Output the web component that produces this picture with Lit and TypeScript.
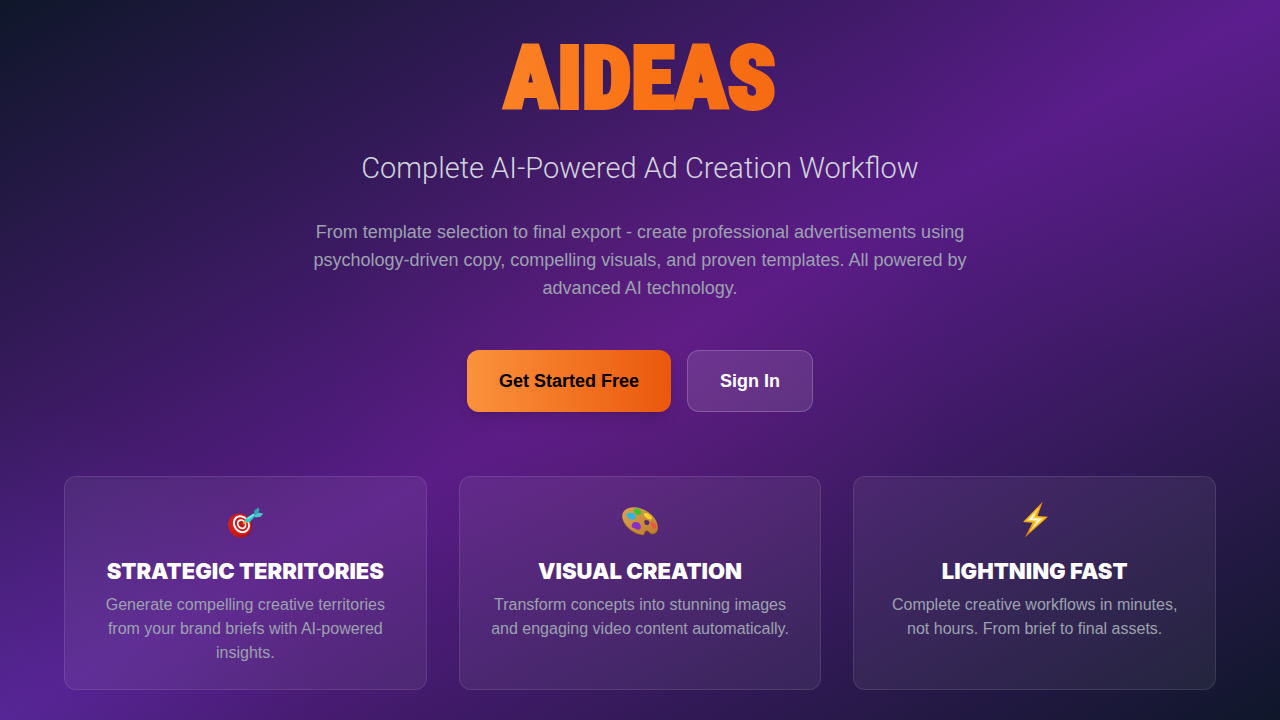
import { LitElement, html, css, svg } from "lit";
import { customElement } from "lit/decorators.js";

const target = svg`
  <defs>
    <linearGradient id="rim" x1="0" y1="0" x2="1" y2="1">
      <stop offset="0" stop-color="#e8211d" /><stop offset="1" stop-color="#8f0f12" />
    </linearGradient>
  </defs>
  <ellipse cx="15" cy="24.6" rx="11.6" ry="12.4" transform="rotate(-38 15 24.6)" fill="url(#rim)" />
  <ellipse cx="16" cy="23.4" rx="9.8" ry="11" transform="rotate(-38 16 23.4)" fill="#d81f1e" />
  <ellipse cx="16.4" cy="23.2" rx="8" ry="9.4" transform="rotate(-38 16.4 23.2)" fill="#fff" />
  <ellipse cx="16.5" cy="23.2" rx="6.2" ry="7.4" transform="rotate(-38 16.5 23.2)" fill="#cf1d1d" />
  <ellipse cx="16.6" cy="23.2" rx="4.4" ry="5.3" transform="rotate(-38 16.6 23.2)" fill="#fff" />
  <ellipse cx="16.7" cy="23.2" rx="2.8" ry="3.4" transform="rotate(-38 16.7 23.2)" fill="#c51a1c" />
  <path d="M17.5 23l2.2-4 2.8 2.5z" fill="#f2b21b" />
  <path d="M20.5 17.5l6.5-4.3 4.2-1.4-1.6 4-4.3 4.6q-2.5 1.5-4.5.5-1.5-1.2-.3-3.4z" fill="#35c9d2" />
  <path d="M29 14l.6-4.800 3.800-2.700 1.200 2.700-2.800 4z" fill="#2fa9b2" />
  <path d="M29.500 14.500l4-3 4.700 1.300-2.700 3-5.200.8z" fill="#4fc6cd" />
  <path d="M22.500 17.800l6.500-4.300" stroke="#8eeeee" stroke-width="1.200" />
`;

const palette = svg`
  <defs>
    <linearGradient id="wood" x1="0" y1="0" x2="1" y2="1">
      <stop offset="0" stop-color="#dba24f" /><stop offset="1" stop-color="#bd7d30" />
    </linearGradient>
  </defs>
  <path fill-rule="evenodd" fill="#8b5a20" d="M2.500 14C4 8 12 5.500 21 8.500c9 3 16 10 16.700 17.500.5 5-2 7.300-5 7.500-3.500.2-3.300-3-6-3.200-2.500 0-1 4.200-4 4C14 34 .5 23.500 2.500 14z M24.500 21c0 2.200 1.500 3.400 3 3.200s2.500-2.200 1.500-3.600c-1.200-1.700-4.500-1.900-4.500.4z" />
  <path fill-rule="evenodd" fill="url(#wood)" d="M2.500 13C4 7.300 12 4.500 21 7.500c9 3 16 10 16.700 17.500.5 5-2 7.300-5 7.500-3.500.2-3.300-3-6-3.200-3 0-1.300 4.300-4 4.100C14 33 .5 22.500 2.500 13z M24 20.500c0 2.700 1.700 3.900 3.300 3.700s2.800-2.200 1.700-4c-1.300-1.900-5-2.200-5 .3z" />
  <path d="M6.800 14c0-2.700 2.500-2 4-2.300 2.700-.3 5.200 2 4.800 4.500-.4 2.600-3 2.800-4.900 2.400-2-.4-1.300-1.800-2.900-2.300-1-.4-1.200-1.300-1-2.300z" fill="#2fb4e6" />
  <path d="M14 8.500c1.500-1.500 4.300-1.200 5.800.5 1.700 1.200 2.200 3.800.3 4.800-1.800.9-3.700.2-4.500-1-1-1.400-2.800-2.100-1.600-4.300z" fill="#3cc530" />
  <path d="M24.500 12.300c1.500-1 4.200.3 5.800 2 1.600 1.600 2.200 4 .6 4.200-2.100.1-3.300-.8-4.700-1.700-1.700-1.100-3-3.500-1.700-4.500z" fill="#fbd52c" />
  <path d="M12.500 22.500c1.700-2.200 6-1.700 7.500.7 1.700 2.500 1 5.300-1.700 5.600-2.200.1-3.100-1.700-5.200-2-1.900-.3-1.500-2.600-.6-4.300z" fill="#8b2ccb" />
  <path d="M31.300 21.500c1.600-.7 3.800 1 4.900 3.200.9 1.800.2 3.500-1.500 3-1.400-.4-2-1.600-3-2.700-.9-1-1.700-3-.4-3.500z" fill="#f1523f" />
`;

const bolt = svg`
  <defs>
    <linearGradient id="edge" x1="0" y1="0" x2="0" y2="1">
      <stop offset="0" stop-color="#f39a12" /><stop offset=".6" stop-color="#f7a916" /><stop offset="1" stop-color="#cf720d" />
    </linearGradient>
  </defs>
  <path d="M27.700.7L8 21l9.500.8L9.700 36.700 33 15.700l-10.500-.8z" fill="url(#edge)" />
  <path d="M24.500 5.500L11 19.700l9.500.7-6.500 11L29.500 16.700l-9.800-.5z" fill="#ffd84a" />
  <path d="M21.500 10L13.500 18.900l9 .6-4.700 7.500 8.700-9.300-9-.3z" fill="#fffbe0" />
`;

const features = [
  {
    icon: target,
    title: "STRATEGIC TERRITORIES",
    text: "Generate compelling creative territories from your brand briefs with AI-powered insights.",
  },
  {
    icon: palette,
    title: "VISUAL CREATION",
    text: "Transform concepts into stunning images and engaging video content automatically.",
  },
  {
    icon: bolt,
    title: "LIGHTNING FAST",
    text: "Complete creative workflows in minutes, not hours. From brief to final assets.",
  },
];

@customElement("app-root")
export class AppRoot extends LitElement {
  static styles = css`
    :host {
      display: block;
      font-family: "Helvetica Neue", "Liberation Sans", Arial, sans-serif;
      color: #fff;
    }
    * {
      box-sizing: border-box;
      margin: 0;
    }
    .page {
      min-height: 100vh;
      display: flex;
      flex-direction: column;
      justify-content: center;
      padding: 24px 64px;
      text-align: center;
      background:
        radial-gradient(circle at 50% 50%, rgba(219, 39, 119, 0.07), transparent 320px),
        radial-gradient(circle at 100% 0%, rgba(147, 51, 234, 0.08), transparent 400px),
        radial-gradient(circle at 0% 100%, rgba(79, 90, 229, 0.16), transparent 320px),
        linear-gradient(to bottom right, #0f172a, #581c87, #0f172a);
    }
    .hero {
      display: flex;
      flex-direction: column;
      align-items: center;
      margin-bottom: 64px;
    }
    .brand {
      font-family: Impact, "Roboto Condensed", Roboto, sans-serif;
      font-size: 88px;
      line-height: 96px;
      font-weight: 900;
      padding: 0 8px;
      margin-bottom: 24px;
      color: transparent;
      -webkit-text-stroke: 4px transparent;
      background: linear-gradient(to right, #fb8226, #f97316, #f56a12);
      -webkit-background-clip: text;
      background-clip: text;
    }
    .tagline {
      font-family: "Helvetica Neue", Roboto, sans-serif;
      font-size: 29px;
      line-height: 36px;
      font-weight: 300;
      color: #d1d5db;
      margin-bottom: 32px;
    }
    .lead {
      max-width: 672px;
      font-size: 18px;
      line-height: 28px;
      color: #9ca3af;
      margin-bottom: 48px;
    }
    .actions {
      display: flex;
      flex-wrap: wrap;
      justify-content: center;
      gap: 16px;
    }
    .button {
      font: inherit;
      font-size: 18px;
      line-height: 28px;
      font-weight: 700;
      padding: 16px 32px;
      border: 0;
      border-radius: 12px;
      cursor: pointer;
    }
    .primary {
      color: #000;
      background: linear-gradient(to right, #fb923c, #ea580c);
      box-shadow: 0 10px 15px -3px rgba(0, 0, 0, 0.1), 0 4px 6px -4px rgba(0, 0, 0, 0.1);
    }
    .secondary {
      color: #fff;
      background: rgba(255, 255, 255, 0.1);
      border: 1px solid rgba(255, 255, 255, 0.2);
    }
    .features {
      display: grid;
      grid-template-columns: repeat(3, 1fr);
      gap: 32px;
    }
    .card {
      display: flex;
      flex-direction: column;
      align-items: center;
      padding: 24px 28px;
      border: 1px solid rgba(255, 255, 255, 0.1);
      border-radius: 12px;
      background: rgba(255, 255, 255, 0.06);
    }
    .icon {
      width: 40px;
      height: 40px;
      margin-bottom: 16px;
    }
    .title {
      font-family: "Arial Black", Inter, sans-serif;
      font-size: 22px;
      line-height: 28px;
      font-weight: 900;
      margin-bottom: 8px;
    }
    .text {
      font-size: 16px;
      line-height: 24px;
      color: #9ca3af;
    }
    @media (max-width: 800px) {
      .page {
        padding: 24px;
      }
      .features {
        grid-template-columns: 1fr;
      }
    }
  `;

  render() {
    return html`
      <main class="page">
        <section class="hero">
          <h1 class="brand">AIDEAS</h1>
          <p class="tagline">Complete AI-Powered Ad Creation Workflow</p>
          <p class="lead">
            From template selection to final export - create professional advertisements using
            psychology-driven copy, compelling visuals, and proven templates. All powered by
            advanced AI technology.
          </p>
          <div class="actions">
            <button class="button primary" type="button">Get Started Free</button>
            <button class="button secondary" type="button">Sign In</button>
          </div>
        </section>
        <section class="features">
          ${features.map(
            (f) => html`
              <article class="card">
                <svg class="icon" viewBox="0 0 40 40" fill="none" aria-hidden="true">${f.icon}</svg>
                <h2 class="title">${f.title}</h2>
                <p class="text">${f.text}</p>
              </article>
            `
          )}
        </section>
      </main>
    `;
  }
}
